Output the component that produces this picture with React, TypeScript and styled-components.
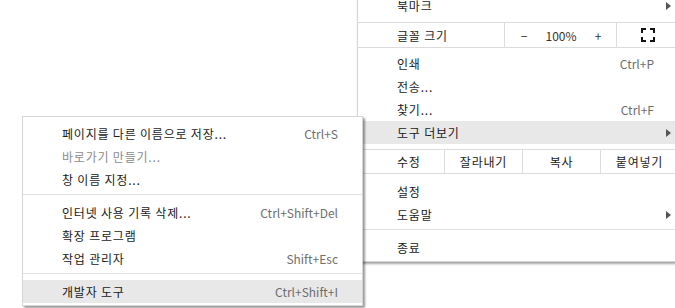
import React from "react";
import styled, { createGlobalStyle } from "styled-components";

const GlobalStyle = createGlobalStyle`
    html, body {
        margin: 0;
        padding: 0;
        background: #ffffff;
    }
    body {
        font-family: "Noto Sans CJK KR", "Noto Sans", sans-serif;
        font-size: 12px;
        color: #1a1a1a;
    }
`;

const Stage = styled.div`
    position: relative;
    width: 675px;
    height: 308px;
    overflow: hidden;
    background: #ffffff;
`;

const MainMenu = styled.div`
    display: flex;
    flex-direction: column;
    width: 320px;
    margin: -12px 0 0 357px;
    padding: 5px 0 2px;
    background: #ffffff;
    border: 1px solid #d6d6d6;
    box-shadow: 1px 2px 2px rgba(0, 0, 0, 0.35);
`;

const SubMenu = styled.div`
    position: absolute;
    left: 22px;
    top: 116px;
    width: 339px;
    display: flex;
    flex-direction: column;
    padding: 5px 0 2px;
    background: #ffffff;
    border: 1px solid #d6d6d6;
    box-shadow: 2px 2px 2px rgba(0, 0, 0, 0.4);
`;

const Item = styled.div<{ $active?: boolean; $disabled?: boolean }>`
    display: flex;
    align-items: center;
    height: 23px;
    padding-left: 39px;
    background: ${(p) => (p.$active ? "#e8e8e8" : "transparent")};
    color: ${(p) => (p.$disabled ? "#8c8c8c" : "#1a1a1a")};
`;

const Label = styled.span`
    flex: 1;
    white-space: nowrap;
    line-height: 23px;
    letter-spacing: 0.8px;
`;

const Shortcut = styled.span`
    color: #6e6e6e;
    white-space: nowrap;
    line-height: 23px;
`;

const Tail = styled.span`
    display: flex;
    align-items: center;
    width: 24px;
    flex: none;
`;

const Arrow = styled.span`
    margin-left: 12px;
    width: 0;
    height: 0;
    border-top: 4px solid transparent;
    border-bottom: 4px solid transparent;
    border-left: 5px solid #555555;
`;

const Separator = styled.div`
    height: 1px;
    margin: 3px 0 6px;
    background: #e0e0e0;
`;

const SplitRow = styled.div<{ $top: number; $bottom: number; $height: number }>`
    display: flex;
    align-items: stretch;
    height: ${(p) => p.$height}px;
    margin: ${(p) => p.$top}px 0 ${(p) => p.$bottom}px;
    border-top: 1px solid #dcdcdc;
    border-bottom: 1px solid #dcdcdc;
`;

const RowLabel = styled.span<{ $width: number }>`
    display: flex;
    align-items: center;
    width: ${(p) => p.$width}px;
    padding-left: 39px;
    box-sizing: border-box;
    flex: none;
    letter-spacing: 0.8px;
`;

const Cell = styled.span<{ $width: number }>`
    display: flex;
    align-items: center;
    justify-content: center;
    width: ${(p) => p.$width}px;
    flex: none;
    border-left: 1px solid #dcdcdc;
    box-sizing: border-box;
    letter-spacing: 0.8px;
`;

const ZoomControls = styled.span`
    display: grid;
    grid-template-columns: 38px 36px 38px;
    width: 112px;
    flex: none;
    border-left: 1px solid #dcdcdc;
    box-sizing: border-box;
`;

const ZoomPart = styled.span`
    display: flex;
    align-items: center;
    justify-content: center;
    color: #333333;
`;

const FullscreenIcon = () => (
    <svg width="14" height="14" viewBox="0 0 14 14" fill="none" stroke="#111" strokeWidth="2">
        <path d="M1 5V1h4M9 1h4v4M13 9v4H9M5 13H1V9" />
    </svg>
);

export default function App() {
    return (
        <>
            <GlobalStyle />
            <Stage>
                <MainMenu>
                    <Item>
                        <Label>북마크</Label>
                        <Tail>
                            <Arrow />
                        </Tail>
                    </Item>
                    <SplitRow $top={5} $bottom={4} $height={24}>
                        <RowLabel $width={146}>글꼴 크기</RowLabel>
                        <ZoomControls>
                            <ZoomPart>−</ZoomPart>
                            <ZoomPart>100%</ZoomPart>
                            <ZoomPart>+</ZoomPart>
                        </ZoomControls>
                        <Cell $width={62}>
                            <FullscreenIcon />
                        </Cell>
                    </SplitRow>
                    <Item>
                        <Label>인쇄</Label>
                        <Shortcut>Ctrl+P</Shortcut>
                        <Tail />
                    </Item>
                    <Item>
                        <Label>전송...</Label>
                    </Item>
                    <Item>
                        <Label>찾기...</Label>
                        <Shortcut>Ctrl+F</Shortcut>
                        <Tail />
                    </Item>
                    <Item $active>
                        <Label>도구 더보기</Label>
                        <Tail>
                            <Arrow />
                        </Tail>
                    </Item>
                    <SplitRow $top={5} $bottom={6} $height={23}>
                        <RowLabel $width={86}>수정</RowLabel>
                        <Cell $width={78}>잘라내기</Cell>
                        <Cell $width={78}>복사</Cell>
                        <Cell $width={78}>붙여넣기</Cell>
                    </SplitRow>
                    <Item>
                        <Label>설정</Label>
                    </Item>
                    <Item>
                        <Label>도움말</Label>
                        <Tail>
                            <Arrow />
                        </Tail>
                    </Item>
                    <Separator />
                    <Item>
                        <Label>종료</Label>
                    </Item>
                </MainMenu>

                <SubMenu>
                    <Item>
                        <Label>페이지를 다른 이름으로 저장...</Label>
                        <Shortcut>Ctrl+S</Shortcut>
                        <Tail />
                    </Item>
                    <Item $disabled>
                        <Label>바로가기 만들기...</Label>
                    </Item>
                    <Item>
                        <Label>창 이름 지정...</Label>
                    </Item>
                    <Separator />
                    <Item>
                        <Label>인터넷 사용 기록 삭제...</Label>
                        <Shortcut>Ctrl+Shift+Del</Shortcut>
                        <Tail />
                    </Item>
                    <Item>
                        <Label>확장 프로그램</Label>
                    </Item>
                    <Item>
                        <Label>작업 관리자</Label>
                        <Shortcut>Shift+Esc</Shortcut>
                        <Tail />
                    </Item>
                    <Separator />
                    <Item $active>
                        <Label>개발자 도구</Label>
                        <Shortcut>Ctrl+Shift+I</Shortcut>
                        <Tail />
                    </Item>
                </SubMenu>
            </Stage>
        </>
    );
}
